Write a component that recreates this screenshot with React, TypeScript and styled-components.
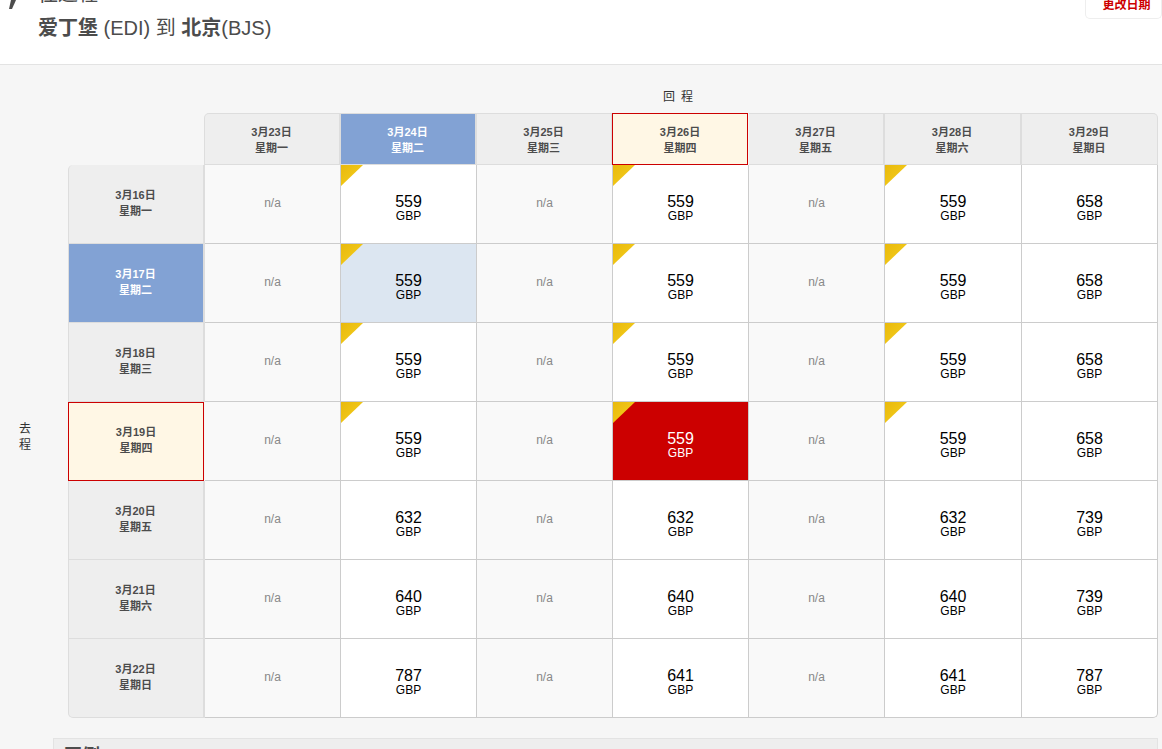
import React from "react";
import styled, { createGlobalStyle } from "styled-components";

const Global = createGlobalStyle`
  html, body { margin: 0; padding: 0; height: 749px; overflow: hidden; background: #f6f6f6; }
  body { font-family: "Liberation Sans", "Noto Sans CJK SC", sans-serif; color: #4c4c4c; }
`;

const Page = styled.div`
  width: 1162px;
  height: 749px;
  overflow: hidden;
  display: flex;
  flex-direction: column;
`;

const Header = styled.header`
  height: 65px;
  flex: none;
  box-sizing: border-box;
  background: #fff;
  border-bottom: 1px solid #e3e3e3;
  display: flex;
  justify-content: space-between;
  align-items: flex-start;
  overflow: hidden;
`;

const HeadLeft = styled.div`
  display: flex;
  align-items: flex-start;
`;

const PlaneMark = styled.svg`
  width: 14px;
  height: 10px;
  margin: 0 0 0 6px;
  flex: none;
`;

const Titles = styled.div`
  margin: -16px 0 0 18px;
`;

const TripType = styled.div`
  font-size: 20px;
  line-height: 20px;
  color: #4c4c4c;
`;

const Route = styled.h1`
  margin: 12px 0 0;
  font-size: 20px;
  line-height: 24px;
  font-weight: 400;
  color: #4c4c4c;
  b { font-weight: 700; }
`;

const ChangeDate = styled.button`
  box-sizing: border-box;
  width: 77px;
  height: 19px;
  padding: 0 0 0 6px;
  border: 1px solid #eee;
  border-top: none;
  border-radius: 0 0 5px 5px;
  background: #fff;
  color: #c00;
  font: 700 12px/10px "Liberation Sans", "Noto Sans CJK SC", sans-serif;
  display: flex;
  justify-content: center;
  align-items: flex-start;
`;

const Body = styled.main`
  flex: 1;
  display: flex;
  flex-direction: column;
`;

const ReturnLabel = styled.div`
  height: 48px;
  width: 1162px;
  box-sizing: border-box;
  padding: 25px 2px 0 202px;
  text-align: center;
  font-size: 12px;
  line-height: 15px;
  letter-spacing: 6px;
  color: #333;
`;

const MatrixRow = styled.div`
  display: flex;
  align-items: stretch;
`;

const DepartLabel = styled.div`
  width: 68px;
  flex: none;
  box-sizing: border-box;
  padding: 308px 37px 0 0;
  text-align: right;
  font-size: 12px;
  line-height: 16px;
  color: #333;
`;

const Grid = styled.div`
  display: grid;
  grid-template-columns: 137px 136px 136px 136px 136px 136px 137px 136px;
  grid-template-rows: 52px repeat(7, 79px);
  width: 1090px;
`;

const Corner = styled.div`
  grid-column: 1;
  grid-row: 1;
`;

const DateHead = styled.div<{ $tone: string; $pos?: string }>`
  box-sizing: border-box;
  display: flex;
  flex-direction: column;
  justify-content: center;
  align-items: center;
  font-size: 11px;
  line-height: 16px;
  font-weight: 700;
  padding: 1px 1px 0 0;
  background: ${(p) => (p.$tone === "blue" ? "#82a2d4" : p.$tone === "today" ? "#fff7e5" : "#eee")};
  color: ${(p) => (p.$tone === "blue" ? "#fff" : "#4c4c4c")};
  border-style: solid;
  border-color: #ddd;
  border-width: 1px 2px 1px 0;
  ${(p) =>
    p.$tone === "today"
      ? "border: 1px solid #c00; margin: 0 1px 0 -1px; padding-right: 0;"
      : ""}
  ${(p) =>
    p.$pos === "tl"
      ? "border-top-left-radius: 5px; border-left-width: 1px; margin-left: -1px;"
      : ""}
  ${(p) => (p.$pos === "tr" ? "border-top-right-radius: 5px; border-right-width: 1px;" : "")}
`;

const SideHead = styled(DateHead)`
  margin-left: 0;
  padding: 0 1px 3px 0;
  border-width: 0 2px 1px 1px;
  ${(p) =>
    p.$tone === "today"
      ? "border: 1px solid #c00; margin: 0 1px 0 0; padding-right: 0;"
      : ""}
  ${(p) => (p.$pos === "bl" ? "border-bottom-left-radius: 5px;" : "")}
`;

const Cell = styled.div<{ $tone: string; $pos?: string }>`
  position: relative;
  box-sizing: border-box;
  display: flex;
  flex-direction: column;
  align-items: center;
  justify-content: center;
  padding-bottom: 3px;
  background: ${(p) =>
    p.$tone === "selected" ? "#c00" : p.$tone === "cross" ? "#dce6f1" : p.$tone === "na" ? "#f9f9f9" : "#fff"};
  color: ${(p) => (p.$tone === "selected" ? "#fff" : "#000")};
  border-right: 1px solid #ccc;
  border-bottom: 1px solid #ccc;
  ${(p) => (p.$pos === "br" ? "border-bottom-right-radius: 5px;" : "")}
`;

const Price = styled.span`
  margin-top: 10px;
  font-size: 16px;
  line-height: 16px;
`;

const Currency = styled.span`
  font-size: 12px;
  line-height: 12px;
`;

const NotAvailable = styled.span`
  font-size: 12px;
  line-height: 16px;
  color: #888;
`;

const Flag = styled.span`
  position: absolute;
  left: 0;
  top: 0;
  width: 22px;
  height: 21px;
  background: linear-gradient(135deg, #e9b90c 0%, #f5d020 100%);
  clip-path: polygon(0 0, 100% 0, 0 100%);
`;

const Legend = styled.div`
  margin: 20px 0 0 53px;
  height: 40px;
  width: 1105px;
  box-sizing: border-box;
  background: #eee;
  border: 1px solid #e3e3e3;
  padding: 7px 0 0 10px;
  font-size: 18px;
  font-weight: 700;
  line-height: 20px;
  color: #4c4c4c;
`;

const ret = [
  ["3月23日", "星期一"], ["3月24日", "星期二"], ["3月25日", "星期三"], ["3月26日", "星期四"],
  ["3月27日", "星期五"], ["3月28日", "星期六"], ["3月29日", "星期日"],
];
const dep = [
  ["3月16日", "星期一"], ["3月17日", "星期二"], ["3月18日", "星期三"], ["3月19日", "星期四"],
  ["3月20日", "星期五"], ["3月21日", "星期六"], ["3月22日", "星期日"],
];
const prices: (number[])[] = [
  [559, 559, 559, 658], [559, 559, 559, 658], [559, 559, 559, 658], [559, 559, 559, 658],
  [632, 632, 632, 739], [640, 640, 640, 739], [787, 641, 641, 787],
];
const priceCols = [1, 3, 5, 6];

const headTone = (i: number) => (i === 1 ? "blue" : i === 3 ? "today" : "plain");

export default function App() {
  return (
    <Page>
      <Global />
      <Header>
        <HeadLeft>
          <PlaneMark viewBox="0 0 14 10">
            <path d="M5 0h5L6 9H3z" fill="#4c4c4c" />
          </PlaneMark>
          <Titles>
            <TripType>往返程</TripType>
            <Route>
              <b>爱丁堡</b> (EDI) 到 <b>北京</b>(BJS)
            </Route>
          </Titles>
        </HeadLeft>
        <ChangeDate>更改日期</ChangeDate>
      </Header>
      <Body>
        <ReturnLabel>回程</ReturnLabel>
        <MatrixRow>
          <DepartLabel>去<br />程</DepartLabel>
          <Grid>
            <Corner />
            {ret.map((d, i) => (
              <DateHead key={d[0]} $tone={headTone(i)} $pos={i === 0 ? "tl" : i === 6 ? "tr" : undefined}>
                <span>{d[0]}</span>
                <span>{d[1]}</span>
              </DateHead>
            ))}
            {dep.map((d, r) => (
              <React.Fragment key={d[0]}>
                <SideHead $tone={headTone(r)} $pos={r === 0 ? "tl" : r === 6 ? "bl" : undefined}>
                  <span>{d[0]}</span>
                  <span>{d[1]}</span>
                </SideHead>
                {ret.map((_, c) => {
                  const idx = priceCols.indexOf(c);
                  if (idx < 0) {
                    return (
                      <Cell key={c} $tone="na">
                        <NotAvailable>n/a</NotAvailable>
                      </Cell>
                    );
                  }
                  const tone = r === 3 && c === 3 ? "selected" : r === 1 && c === 1 ? "cross" : "plain";
                  return (
                    <Cell key={c} $tone={tone} $pos={r === 6 && c === 6 ? "br" : undefined}>
                      {r < 4 && c !== 6 && <Flag />}
                      <Price>{prices[r][idx]}</Price>
                      <Currency>GBP</Currency>
                    </Cell>
                  );
                })}
              </React.Fragment>
            ))}
          </Grid>
        </MatrixRow>
        <Legend>图例</Legend>
      </Body>
    </Page>
  );
}
